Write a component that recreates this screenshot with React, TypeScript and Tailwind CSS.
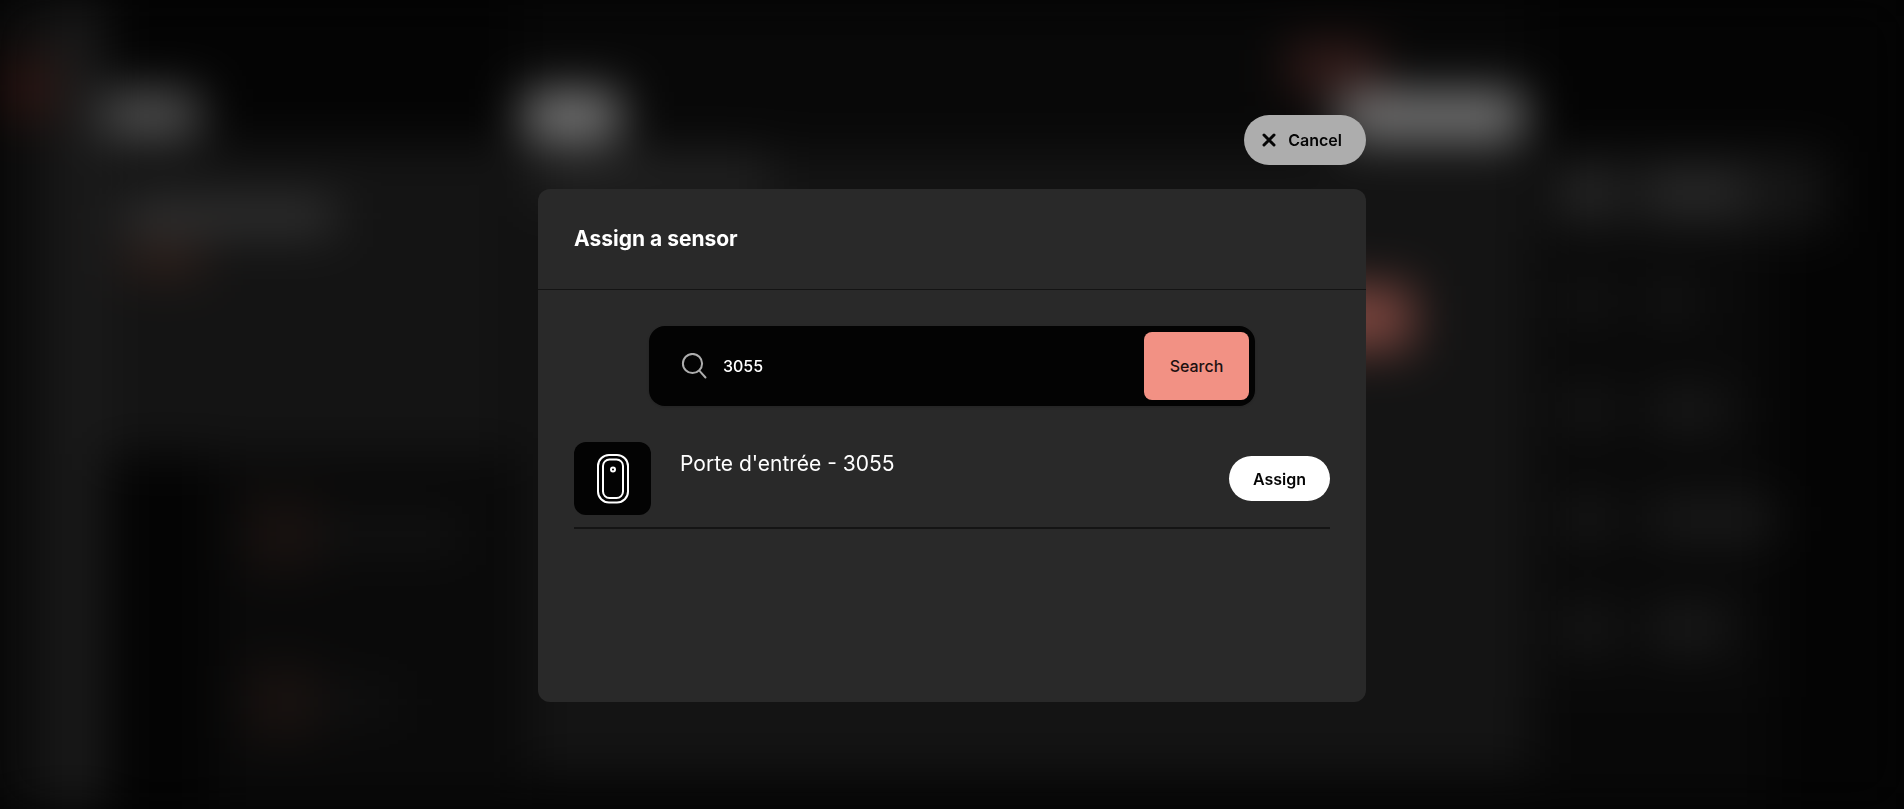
import React, { useState } from 'react';

type Sensor = {
  id: string;
  name: string;
};

const sensors: Sensor[] = [
  { id: '3055', name: "Porte d'entrée - 3055" },
];

const menuRows = [
  { width: 'w-24', tone: 'bg-[#2d2d2d]', row: 'bg-[#161616]' },
  { width: 'w-12', tone: 'bg-[#171717]', row: '' },
  { width: 'w-20', tone: 'bg-[#1b1b1b]', row: '' },
  { width: 'w-32', tone: 'bg-[#1c1c1c]', row: '' },
  { width: 'w-20', tone: 'bg-[#1d1d1d]', row: '' },
];

const CloseIcon = () => (
  <svg viewBox="0 0 14 14" className="size-[14px]" fill="none" stroke="currentColor" strokeWidth="3" strokeLinecap="round" aria-hidden="true">
    <path d="M2 2l10 10M12 2L2 12" />
  </svg>
);

const SearchIcon = () => (
  <svg viewBox="0 0 26 26" className="size-[26px] shrink-0 text-[#adadad]" fill="none" stroke="currentColor" strokeWidth="2" strokeLinecap="round" aria-hidden="true">
    <circle cx="11.5" cy="10.5" r="9.6" />
    <path d="M18.3 17.7l6.2 6.8" />
  </svg>
);

const SensorIcon = () => (
  <svg viewBox="0 0 32 50" className="h-[50px] w-8" fill="none" stroke="#fff" strokeWidth="2" aria-hidden="true">
    <rect x="1" y="1" width="30" height="47.5" rx="11" />
    <rect x="6" y="5.5" width="20" height="38.5" rx="6.5" />
    <circle cx="16" cy="15.5" r="2" />
  </svg>
);

/**
 * Dashboard that sits behind the dialog.
 */
const Dashboard = () => (
  <div className="flex h-screen overflow-hidden bg-[#040404] blur-[24px]" aria-hidden="true">
    <div className="w-14 shrink-0 bg-[#0f0f0f] pt-14">
      <div className="h-16 bg-[#2a1512]" />
    </div>
    <div className="w-12 shrink-0 bg-[#1b1b1b]" />

    <div className="flex w-[412px] shrink-0 flex-col pt-[92px]">
      <div className="h-11 w-[96px] bg-[#585858]" />
      <div className="mt-2 h-[310px] bg-[#141414] p-5 pt-14">
        <div className="h-8 w-[210px] bg-[#363636]" />
        <div className="mt-3 h-8 w-20 bg-[#30201b]" />
      </div>
      <div className="ml-[110px] flex flex-1 flex-col gap-24 bg-[#0a0a0a] pt-11 pl-8">
        <div className="flex items-center">
          <div className="size-[72px] bg-[#191210]" />
          <div className="h-8 w-36 bg-[#131313]" />
        </div>
        <div className="flex items-center">
          <div className="size-[72px] bg-[#191210]" />
          <div className="h-8 w-20 bg-[#111111]" />
        </div>
      </div>
    </div>

    <div className="flex flex-1 flex-col bg-[#080808] pt-11">
      <div className="flex justify-end pr-[152px]">
        <div className="h-12 w-[92px] bg-[#351c1a]" />
      </div>
      <div className="flex justify-between pr-2 pl-2">
        <div className="h-12 w-24 bg-[#808080]" />
        <div className="h-12 w-[184px] bg-[#7c7c7c]" />
      </div>
      <div className="mt-3 ml-3 flex h-[620px] flex-col items-end bg-[#141414]">
        <div className="h-12 w-60 self-start bg-[#222222]" />
        <div className="mt-[86px] mr-[120px] h-16 w-[106px] bg-[#7d463f]" />
      </div>
    </div>

    <div className="w-[372px] shrink-0 pt-[152px]">
      <div className="flex flex-col">
        {menuRows.map((item, index) => (
          <div key={index} className="flex h-[109px] bg-[linear-gradient(to_right,#0a0a0a_242px,#040404_242px)]">
            <div className={`ml-4 flex h-20 w-[280px] items-center gap-10 pl-5 ${item.row}`}>
              <div className={`size-10 ${item.tone}`} />
              <div className={`h-9 ${item.width} ${item.tone}`} />
            </div>
          </div>
        ))}
        <div className="h-32 w-[242px] bg-[#080808]" />
      </div>
    </div>
  </div>
);

const App = (): React.JSX.Element => {

  // Text typed in the search field
  const [query, setQuery] = useState('3055');

  return (
    <div className="bg-[#040404] font-[Inter,sans-serif]">
      <Dashboard />
      <div className="fixed inset-0 overflow-auto px-4 pt-[115px] pb-8">
        <div role="dialog" aria-labelledby="dialog-title" className="mx-auto flex max-w-[828px] flex-col">
          <button type="button" className="
            flex h-[50px] items-center gap-3 self-end
            rounded-full bg-[#adadad] pr-6 pl-[18px]
            text-base font-semibold text-[#050505]
          ">
            <CloseIcon />
            Cancel
          </button>

          <section className="mt-6 min-h-[513px] rounded-xl bg-[#292929] text-white">
            <header className="flex h-[101px] items-center border-b border-[#141414] px-9">
              <h1 id="dialog-title" className="text-[21px] leading-9 font-bold">Assign a sensor</h1>
            </header>

            <div className="px-9 pt-9">
              <form
                className="
                  mx-auto flex h-20 max-w-[606px] items-center
                  rounded-2xl bg-[#030303] pr-[6px] pl-8
                  shadow-sm
                "
                onSubmit={(e) => e.preventDefault()}
              >
                <SearchIcon />
                <input
                  type="text"
                  aria-label="Search sensors"
                  className="min-w-0 flex-1 bg-transparent px-4 text-base font-medium outline-none"
                  value={query}
                  onChange={(e) => setQuery(e.target.value)}
                />
                <button type="submit" className="
                  h-[68px] w-[105px] rounded-lg bg-[#f29184]
                  text-base font-medium text-[#1c1010]
                ">
                  Search
                </button>
              </form>

              <ul className="mt-9">
                {sensors.map((sensor) => (
                  <li key={sensor.id} className="flex items-center border-b-2 border-[#141414] pb-3">
                    <div className="flex h-[73px] w-[77px] items-center justify-center rounded-xl bg-[#030303]">
                      <SensorIcon />
                    </div>
                    <h2 className="ml-[29px] flex-1 self-start pt-1 text-[21px] leading-9">{sensor.name}</h2>
                    <button type="button" className="
                      h-[45px] rounded-full bg-white px-6
                      text-base font-semibold text-[#050505]
                    ">
                      Assign
                    </button>
                  </li>
                ))}
              </ul>
            </div>
          </section>
        </div>
      </div>
    </div>
  );
};

export default App;
